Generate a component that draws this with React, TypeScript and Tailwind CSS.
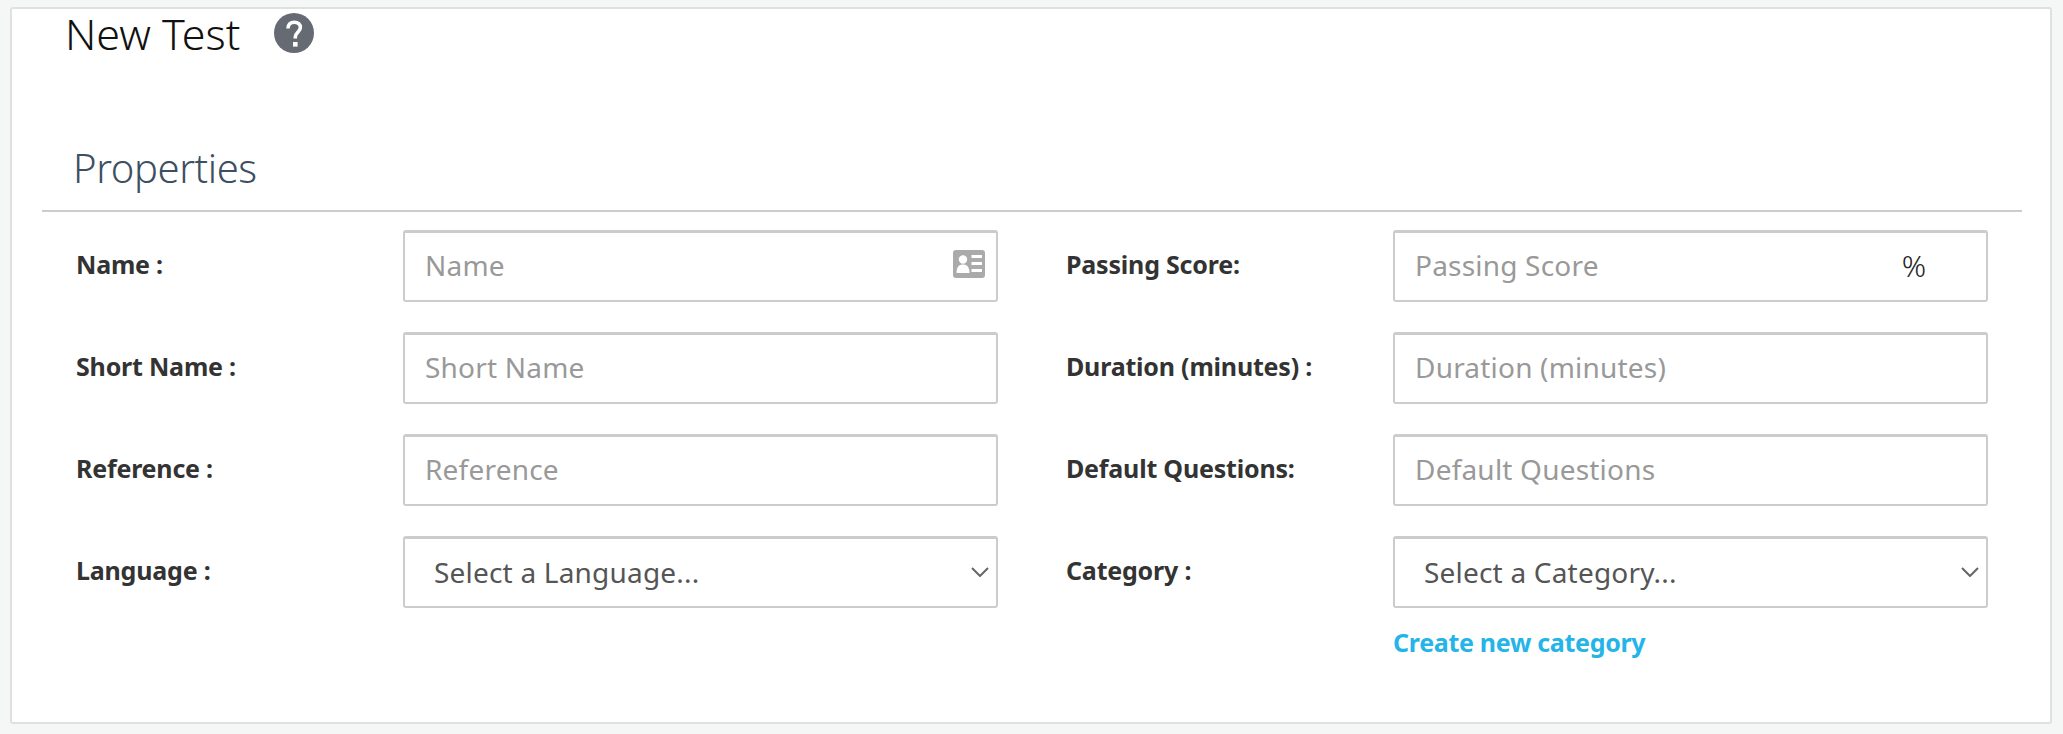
const font = "font-['Noto_Sans',sans-serif]";

function Label({ children, w }: { children: string; w: string }) {
  return <label className={`${w} shrink-0 pb-[4px] text-[25px] leading-none font-bold tracking-[-0.2px] text-[#333333]`}>{children}</label>;
}

function Field({ placeholder, children }: { placeholder: string; children?: React.ReactNode }) {
  return (
    <div className="relative h-[72px] w-[595px] rounded-[3px] border-[2px] border-t-[3px] border-[#cccccc]">
      <input
        placeholder={placeholder}
        className="h-full w-full px-[20px] pb-[3px] text-[28px] tracking-[0.2px] text-[#333333] outline-none placeholder:text-[#999999]"
      />
      {children}
    </div>
  );
}

function SelectField({ text }: { text: string }) {
  return (
    <div className="relative flex h-[72px] w-[595px] items-center rounded-[3px] border-[2px] border-t-[3px] border-[#cccccc] pb-[2px] pl-[29px] text-[28px] tracking-[0.2px] text-[#555555]">
      <select className="w-full appearance-none bg-transparent outline-none">
        <option>{text}</option>
      </select>
      <svg viewBox="0 0 18 10" className="absolute right-[7px] top-[28px] h-[10px] w-[18px]" fill="none" stroke="#666666" strokeWidth="2">
        <polyline points="1,1 9,9 17,1" />
      </svg>
    </div>
  );
}

function Row({ children }: { children: React.ReactNode }) {
  return <div className="flex items-center">{children}</div>;
}

function QuestionIcon() {
  return (
    <svg viewBox="0 0 40 40" className="ml-[34px] mt-[4px] h-[40px] w-[40px]">
      <circle cx="20" cy="20" r="20" fill="#666a73" />
      <path d="M14 15.5C14 11.5 16.5 9.2 20.2 9.2C23.9 9.2 26.4 11.4 26.4 14.6C26.4 19 21.3 19.6 21.3 24V25.5" fill="none" stroke="#ffffff" strokeWidth="3.6" />
      <rect x="19" y="29" width="4.6" height="4.6" fill="#ffffff" />
    </svg>
  );
}

function CardIcon() {
  return (
    <svg viewBox="0 0 32 28" className="absolute right-[11px] top-[17px] h-[28px] w-[32px]">
      <rect width="32" height="28" rx="3" fill="#aaaaaa" />
      <circle cx="10" cy="9.5" r="4.2" fill="#ffffff" />
      <path d="M3.5 23C3.5 17 6 14.5 10 14.5C14 14.5 16.5 17 16.5 23Z" fill="#ffffff" />
      <rect x="18.5" y="5" width="10.5" height="3" fill="#ffffff" />
      <rect x="18.5" y="12" width="10.5" height="3" fill="#ffffff" />
      <rect x="18.5" y="19" width="10.5" height="3" fill="#ffffff" />
    </svg>
  );
}

export default function App() {
  return (
    <div className={`${font} h-[734px] bg-[#f5f7f6] pt-[7px] pr-[11px] pl-[10px]`}>
      <div className="h-[717px] rounded-[3px] border-[2px] border-[#e0e0e0] bg-white pr-[28px] pl-[30px]">
        <div className="flex h-[90px] items-start pl-[23px]">
          <h1 className="text-[43px] leading-[50px] font-light text-[#111111]">New Test</h1>
          <QuestionIcon />
        </div>
        <div className="h-[113px] border-b-[2px] border-[#cccccc] pl-[31px] pt-[44px] text-[40px] leading-[50px] font-light tracking-[-0.4px] text-[#3d4f61]">
          Properties
        </div>
        <div className="grid grid-cols-[1024px_1fr] gap-y-[30px] pt-[18px]">
          <Row><div className="w-[34px]" /><Label w="w-[327px]">Name :</Label>
            <Field placeholder="Name">
              <CardIcon />
            </Field>
          </Row>
          <Row><Label w="w-[327px]">Passing Score:</Label>
            <Field placeholder="Passing Score">
              <span className="absolute right-[60px] top-[18px] text-[30px] leading-[30px] font-light text-[#222222]">%</span>
            </Field>
          </Row>
          <Row><div className="w-[34px]" /><Label w="w-[327px]">Short Name :</Label><Field placeholder="Short Name" /></Row>
          <Row><Label w="w-[327px]">Duration (minutes) :</Label><Field placeholder="Duration (minutes)" /></Row>
          <Row><div className="w-[34px]" /><Label w="w-[327px]">Reference :</Label><Field placeholder="Reference" /></Row>
          <Row><Label w="w-[327px]">Default Questions:</Label><Field placeholder="Default Questions" /></Row>
          <Row><div className="w-[34px]" /><Label w="w-[327px]">Language :</Label><SelectField text="Select a Language..." /></Row>
          <Row><Label w="w-[327px]">Category :</Label><SelectField text="Select a Category..." /></Row>
        </div>
        <div className="pl-[1351px] pt-[19px] text-[25px] leading-[30px] font-bold tracking-[-0.3px] text-[#25b4e8]">
          <a href="#">Create new category</a>
        </div>
      </div>
    </div>
  );
}
